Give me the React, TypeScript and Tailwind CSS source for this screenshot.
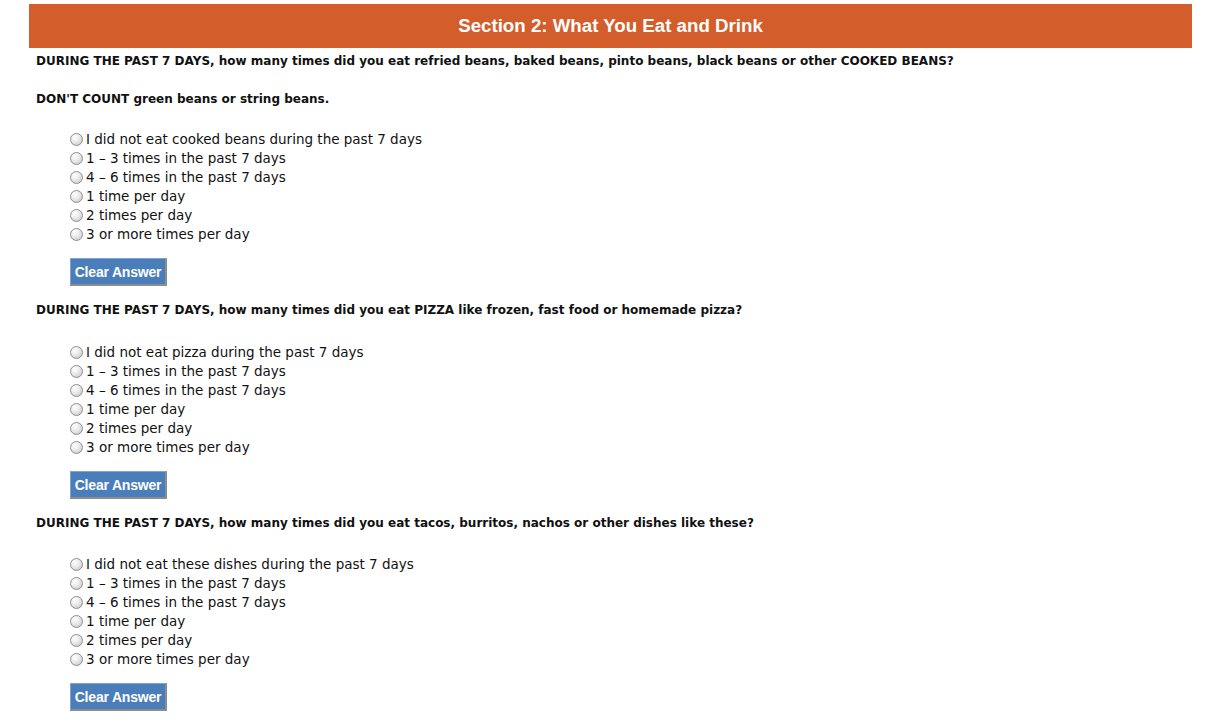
import React from "react";

type Question = {
  lines: string[];
  options: string[];
  gap: string;
};

const questions: Question[] = [
  {
    lines: [
      "DURING THE PAST 7 DAYS, how many times did you eat refried beans, baked beans, pinto beans, black beans or other COOKED BEANS?",
      "DON'T COUNT green beans or string beans.",
    ],
    options: [
      "I did not eat cooked beans during the past 7 days",
      "1 \u2013 3 times in the past 7 days",
      "4 \u2013 6 times in the past 7 days",
      "1 time per day",
      "2 times per day",
      "3 or more times per day",
    ],
    gap: "mt-[21px]",
  },
  {
    lines: [
      "DURING THE PAST 7 DAYS, how many times did you eat PIZZA like frozen, fast food or homemade pizza?",
    ],
    options: [
      "I did not eat pizza during the past 7 days",
      "1 \u2013 3 times in the past 7 days",
      "4 \u2013 6 times in the past 7 days",
      "1 time per day",
      "2 times per day",
      "3 or more times per day",
    ],
    gap: "mt-[23px]",
  },
  {
    lines: [
      "DURING THE PAST 7 DAYS, how many times did you eat tacos, burritos, nachos or other dishes like these?",
    ],
    options: [
      "I did not eat these dishes during the past 7 days",
      "1 \u2013 3 times in the past 7 days",
      "4 \u2013 6 times in the past 7 days",
      "1 time per day",
      "2 times per day",
      "3 or more times per day",
    ],
    gap: "mt-[22px]",
  },
];

const Radio = () => (
  <span className="inline-block w-[13px] h-[13px] rounded-full border border-[#8f8f8f] bg-[radial-gradient(circle_at_35%_30%,#ffffff_0%,#ececec_40%,#cfcfcf_80%,#bdbdbd_100%)] shrink-0" />
);

const QuestionBlock = ({ q }: { q: Question }) => (
  <div className="pt-[4px]">
    <div className="px-[7px]">
      {q.lines.map((line, i) => (
        <p
          key={i}
          className={`text-[12px] font-bold leading-[19px] text-[#111] ${i > 0 ? "mt-[19px]" : ""}`}
        >
          {line}
        </p>
      ))}
    </div>
    <ul className={`${q.gap} pl-[41px]`}>
      {q.options.map((opt) => (
        <li key={opt} className="flex items-center gap-[3px] h-[19px] text-[13.5px] text-[#111]">
          <Radio />
          <span>{opt}</span>
        </li>
      ))}
    </ul>
    <div className="pl-[41px] mt-[14px] pb-[11px]">
      <button className="h-[28px] w-[97px] pt-[2px] bg-[#4a7ebb] border-t border-l border-t-[#7fa3d0] border-l-[#7fa3d0] border-r-2 border-b-2 border-r-[#8c8c8c] border-b-[#8c8c8c] text-white text-[14px] font-bold tracking-[-0.2px] font-['Liberation_Sans',Arial,sans-serif]">
        Clear Answer
      </button>
    </div>
  </div>
);

export default function App() {
  return (
    <div className="min-h-screen bg-white font-['DejaVu_Sans',Verdana,sans-serif]">
      <div className="ml-[29px] mr-[28px] pt-[4px]">
        <div className="h-[44px] bg-[#d45e2b] flex items-center justify-center">
          <h1 className="text-white text-[18.7px] font-bold font-['Liberation_Sans',Arial,sans-serif]">
            Section 2: What You Eat and Drink
          </h1>
        </div>
        {questions.map((q, i) => (
          <QuestionBlock key={i} q={q} />
        ))}
      </div>
    </div>
  );
}
